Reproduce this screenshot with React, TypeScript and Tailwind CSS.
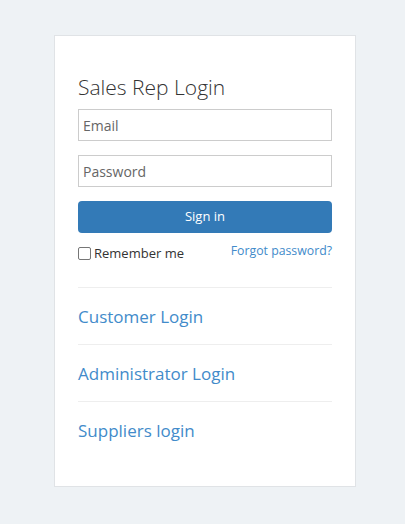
import React from 'react';

const links = ['Customer Login', 'Administrator Login', 'Suppliers login'];

const App: React.FC = () => {
  return (
    <div
      className="min-h-screen bg-[#eef2f5] pt-[35px]"
      style={{ fontFamily: '"Open Sans", "Liberation Sans", sans-serif' }}
    >
      <div className="ml-[54px] w-[302px] bg-white border border-[#e0e3e6] px-[23px] pt-[38px] pb-[28px]">
        <h1 className="text-[21px] leading-[26px] font-light text-[#333]">Sales Rep Login</h1>
        <form className="mt-[9px] flex flex-col" onSubmit={(e) => e.preventDefault()}>
          <input
            type="email"
            placeholder="Email"
            className="h-[32px] w-full border border-[#cccccc] px-[4px] text-[14px] text-[#555] placeholder-[#666] outline-none"
          />
          <input
            type="password"
            placeholder="Password"
            className="mt-[14px] h-[32px] w-full border border-[#cccccc] px-[4px] text-[14px] text-[#555] placeholder-[#666] outline-none"
          />
          <button
            type="submit"
            className="mt-[14px] h-[32px] w-full rounded-[4px] bg-[#337ab7] text-[13px] text-white"
          >
            Sign in
          </button>
          <div className="mt-[9px] flex items-start justify-between">
            <label className="mt-[2px] flex items-center text-[13px] leading-[18px] text-[#333]">
              <span className="inline-block h-[13px] w-[13px] border border-[#767676] rounded-[2px] bg-white mr-[3px]" />
              Remember me
            </label>
            <a href="#" className="text-[12.3px] leading-[18px] text-[#428bca]">
              Forgot password?
            </a>
          </div>
        </form>
        <ul className="mt-[25px]">
          {links.map((l) => (
            <li key={l} className="border-t border-[#eeeeee] pt-[19px] pb-[17px]">
              <a href="#" className="block text-[17px] leading-[20px] text-[#428bca]">
                {l}
              </a>
            </li>
          ))}
        </ul>
      </div>
    </div>
  );
};

export default App;
